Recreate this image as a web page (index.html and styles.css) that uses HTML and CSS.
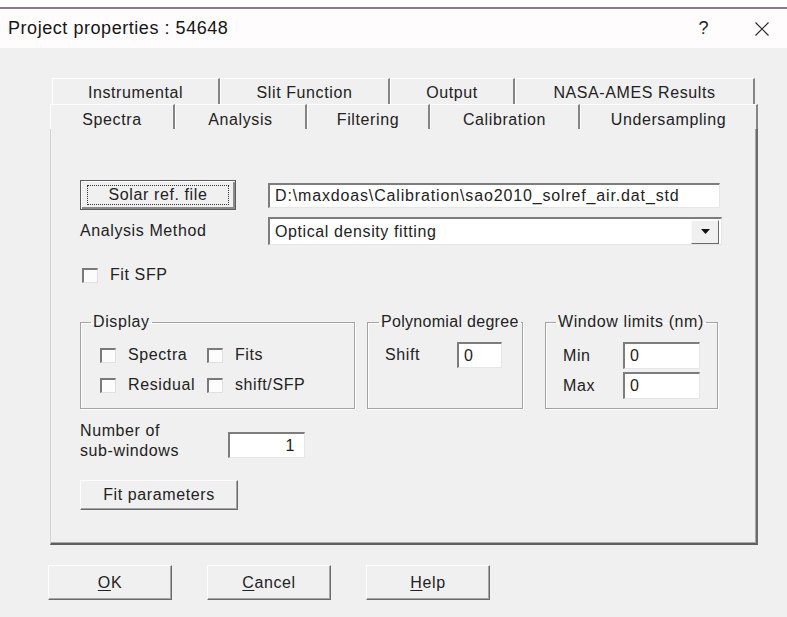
FILE: index.html
```html
<!DOCTYPE html>
<html lang="en">
<head>
<meta charset="utf-8">
<title>Project properties : 54648</title>
<link rel="stylesheet" href="styles.css">
</head>
<body>
<div class="window">
  <div class="top-edge"></div>
  <header class="titlebar">
    <span class="title">Project properties : 54648</span>
    <span class="help-q">?</span>
    <svg class="close" width="16" height="16" viewBox="0 0 16 16" aria-label="Close">
      <path d="M1.5 1.5L14.5 14.5M14.5 1.5L1.5 14.5" stroke="#2a2a2a" stroke-width="1.2" fill="none"/>
    </svg>
  </header>

  <main class="dialog">
    <div class="tabs">
      <div class="tab-row back">
        <div class="tab t-instr">Instrumental</div>
        <div class="tab t-slit">Slit Function</div>
        <div class="tab t-output">Output</div>
        <div class="tab t-nasa">NASA-AMES Results</div>
      </div>
      <div class="tab-row front">
        <div class="tab t-spectra">Spectra</div>
        <div class="tab t-analysis">Analysis</div>
        <div class="tab t-filter">Filtering</div>
        <div class="tab t-calib selected">Calibration</div>
        <div class="tab t-under">Undersampling</div>
      </div>
    </div>

    <section class="panel">
      <div class="row file-row">
        <button class="btn default-btn"><span class="focus-rect">Solar ref. file</span></button>
        <div class="field path-field">D:\maxdoas\Calibration\sao2010_solref_air.dat_std</div>
      </div>

      <div class="row method-row">
        <span class="method-label">Analysis Method</span>
        <div class="combo">
          <span class="combo-text">Optical density fitting</span>
          <span class="combo-btn">
            <svg width="9" height="5" viewBox="0 0 9 5"><path d="M0 0H9L4.5 5Z" fill="#111"/></svg>
          </span>
        </div>
      </div>

      <label class="check fit-sfp"><span class="box"></span>Fit SFP</label>

      <div class="groups">
        <fieldset class="group display-group">
          <legend>Display</legend>
          <div class="check-grid">
            <label class="check"><span class="box"></span>Spectra</label>
            <label class="check"><span class="box"></span>Fits</label>
            <label class="check"><span class="box"></span>Residual</label>
            <label class="check"><span class="box"></span>shift/SFP</label>
          </div>
        </fieldset>

        <fieldset class="group poly-group">
          <legend>Polynomial degree</legend>
          <div class="group-body">
            <div class="pair"><span class="pair-label shift-label">Shift</span><div class="field shift-field">0</div></div>
          </div>
        </fieldset>

        <fieldset class="group limits-group">
          <legend>Window limits (nm)</legend>
          <div class="group-body stack">
            <div class="pair"><span class="pair-label limit-label">Min</span><div class="field limit-field">0</div></div>
            <div class="pair"><span class="pair-label limit-label">Max</span><div class="field limit-field">0</div></div>
          </div>
        </fieldset>
      </div>

      <div class="row subwin-row">
        <span class="subwin-label">Number of<br>sub-windows</span>
        <div class="field num-field">1</div>
      </div>

      <button class="btn fit-btn">Fit parameters</button>
    </section>

    <div class="actions">
      <button class="btn action-btn"><u>O</u>K</button>
      <button class="btn action-btn"><u>C</u>ancel</button>
      <button class="btn action-btn"><u>H</u>elp</button>
    </div>
  </main>
</div>
</body>
</html>
```

FILE: styles.css
```css
html, body {
  margin: 0;
  padding: 0;
}

body {
  width: 787px;
  height: 617px;
  overflow: hidden;
  background: #f0f0f0;
  font-family: "Liberation Sans", Arial, sans-serif;
  font-size: 16px;
  letter-spacing: 0.6px;
  color: #222;
}

/* window chrome */
.top-edge {
  height: 7px;
  background: #ffffff;
  border-bottom: 2px solid #8a7d87;
}

.titlebar {
  height: 39px;
  background: #fffcfd;
  display: flex;
  align-items: center;
  padding: 0 17px 0 8px;
}

.title {
  font-size: 18px;
  letter-spacing: 0.55px;
  color: #151515;
}

.help-q {
  margin-left: auto;
  margin-right: 45px;
  font-size: 18px;
  color: #222;
}

.close {
  display: block;
}

/* dialog body */
.dialog {
  padding-top: 30px;
}

/* tab strip (two rows) */
.tabs {
  margin-left: 50px;
  width: 708px;
}

.tab-row {
  display: flex;
}

.tab-row.back {
  height: 26px;
  padding-left: 2px;
}

.tab-row.front {
  height: 25px;
}

.tab {
  box-sizing: border-box;
  display: flex;
  align-items: center;
  justify-content: center;
  border-top: 1px solid #ffffff;
  border-left: 1px solid #ffffff;
  border-right: 2px solid #858585;
  padding-top: 3px;
  white-space: nowrap;
}

.tab-row.front .tab {
  padding-top: 5px;
}

.t-instr   { width: 168px; }
.t-slit    { width: 170px; }
.t-output  { width: 125px; }
.t-nasa    { width: 240px; }

.t-spectra  { width: 125px; }
.t-analysis { width: 132px; }
.t-filter   { width: 123px; }
.t-calib    { width: 150px; border-left-color: #fbfbfb; }
.t-under    { width: 178px; }

/* tab page */
.panel {
  box-sizing: border-box;
  width: 708px;
  height: 416px;
  margin-left: 50px;
  padding: 51px 0 0 29px;
  border-left: 1px solid #d2d2d2;
  border-right: 2px solid #6b6b6b;
  border-bottom: 2px solid #5e5e5e;
  box-shadow: inset -1px -1px 0 #a9a9a9;
}

.row {
  display: flex;
  align-items: center;
}

/* buttons */
.btn {
  box-sizing: border-box;
  font: inherit;
  letter-spacing: inherit;
  color: inherit;
  background: #f0f0f0;
  border: 1px solid;
  border-color: #fdfdfd #6a6a6a #6a6a6a #fdfdfd;
  box-shadow: inset -1px -1px 0 #a6a6a6;
  padding: 0;
  margin: 0;
  display: flex;
  align-items: center;
  justify-content: center;
}

.default-btn {
  width: 156px;
  height: 30px;
  border: 1px solid #5c5c5c;
  box-shadow: inset 1px 1px 0 #ffffff, inset -2px -2px 0 #8a8a8a;
}

.focus-rect {
  box-sizing: border-box;
  width: 142px;
  height: 20px;
  border: 1px dotted #333;
  display: flex;
  align-items: center;
  justify-content: center;
}

.fit-btn {
  width: 158px;
  height: 30px;
  margin-top: 19px;
}

/* sunken edit fields */
.field {
  box-sizing: border-box;
  background: #ffffff;
  border-style: solid;
  border-width: 2px 1px 1px 2px;
  border-color: #7d7d7d #e6e6e6 #e6e6e6 #7d7d7d;
  display: flex;
  align-items: center;
  padding-left: 5px;
  white-space: nowrap;
}

.path-field {
  width: 452px;
  height: 25px;
  margin-left: 32px;
  letter-spacing: 0.85px;
}

.method-row {
  margin-top: 7px;
  height: 28px;
}

.method-label {
  width: 188px;
}

.combo {
  box-sizing: border-box;
  width: 454px;
  height: 28px;
  background: #ffffff;
  border-style: solid;
  border-width: 2px 1px 1px 2px;
  border-color: #7d7d7d #e6e6e6 #e6e6e6 #7d7d7d;
  display: flex;
  align-items: center;
  padding-left: 5px;
}

.combo-text {
  flex: 1;
}

.combo-btn {
  box-sizing: border-box;
  width: 28px;
  height: 24px;
  margin-right: 2px;
  background: #f0f0f0;
  border: 1px solid;
  border-color: #fbfbfb #6a6a6a #6a6a6a #fbfbfb;
  display: flex;
  align-items: center;
  justify-content: center;
}

.combo-btn svg {
  display: block;
}

/* check boxes */
.check {
  display: flex;
  align-items: center;
  white-space: nowrap;
}

.box {
  box-sizing: border-box;
  width: 16px;
  height: 15px;
  margin-right: 12px;
  background: #fcfcfc;
  border-style: solid;
  border-width: 2px 1px 1px 2px;
  border-color: #7a7a7a #e0e0e0 #e0e0e0 #7a7a7a;
}

.fit-sfp {
  margin-top: 19px;
  height: 22px;
  padding-left: 2px;
}

/* group boxes */
.groups {
  display: flex;
  margin-top: 27px;
}

.group {
  box-sizing: border-box;
  height: 96px;
  margin: 0;
  padding: 0;
  border: 1px solid #a3a3a3;
  box-shadow: inset 1px 1px 0 #ffffff, 1px 1px 0 #ffffff;
  min-width: 0;
}

.group legend {
  margin-left: 10px;
  padding: 0 2px;
  line-height: 18px;
  white-space: nowrap;
}

.display-group {
  width: 275px;
}

.poly-group {
  width: 156px;
  margin-left: 12px;
}

.poly-group legend {
  margin-left: 11px;
  letter-spacing: 0.3px;
}

.limits-group {
  width: 173px;
  margin-left: 22px;
}

.check-grid {
  display: grid;
  grid-template-columns: 107px auto;
  grid-auto-rows: 30px;
  padding: 9px 0 0 19px;
}

.group-body {
  padding: 11px 0 0 17px;
}

.stack {
  display: flex;
  flex-direction: column;
  gap: 3px;
}

.pair {
  display: flex;
  align-items: center;
}

.shift-label {
  width: 72px;
}

.shift-field {
  width: 45px;
  height: 26px;
}

.limit-label {
  width: 60px;
}

.limit-field {
  width: 77px;
  height: 27px;
}

/* sub-windows */
.subwin-row {
  margin-top: 12px;
  align-items: flex-start;
}

.subwin-label {
  width: 148px;
  line-height: 20px;
}

.num-field {
  width: 77px;
  height: 26px;
  margin-top: 11px;
  justify-content: flex-end;
  padding: 0 9px 0 0;
}

/* bottom buttons */
.actions {
  display: flex;
  gap: 35px;
  margin-top: 20px;
  padding-left: 48px;
}

.action-btn {
  width: 124px;
  height: 35px;
}

.action-btn u {
  text-decoration-thickness: 1px;
  text-underline-offset: 2px;
}
```
